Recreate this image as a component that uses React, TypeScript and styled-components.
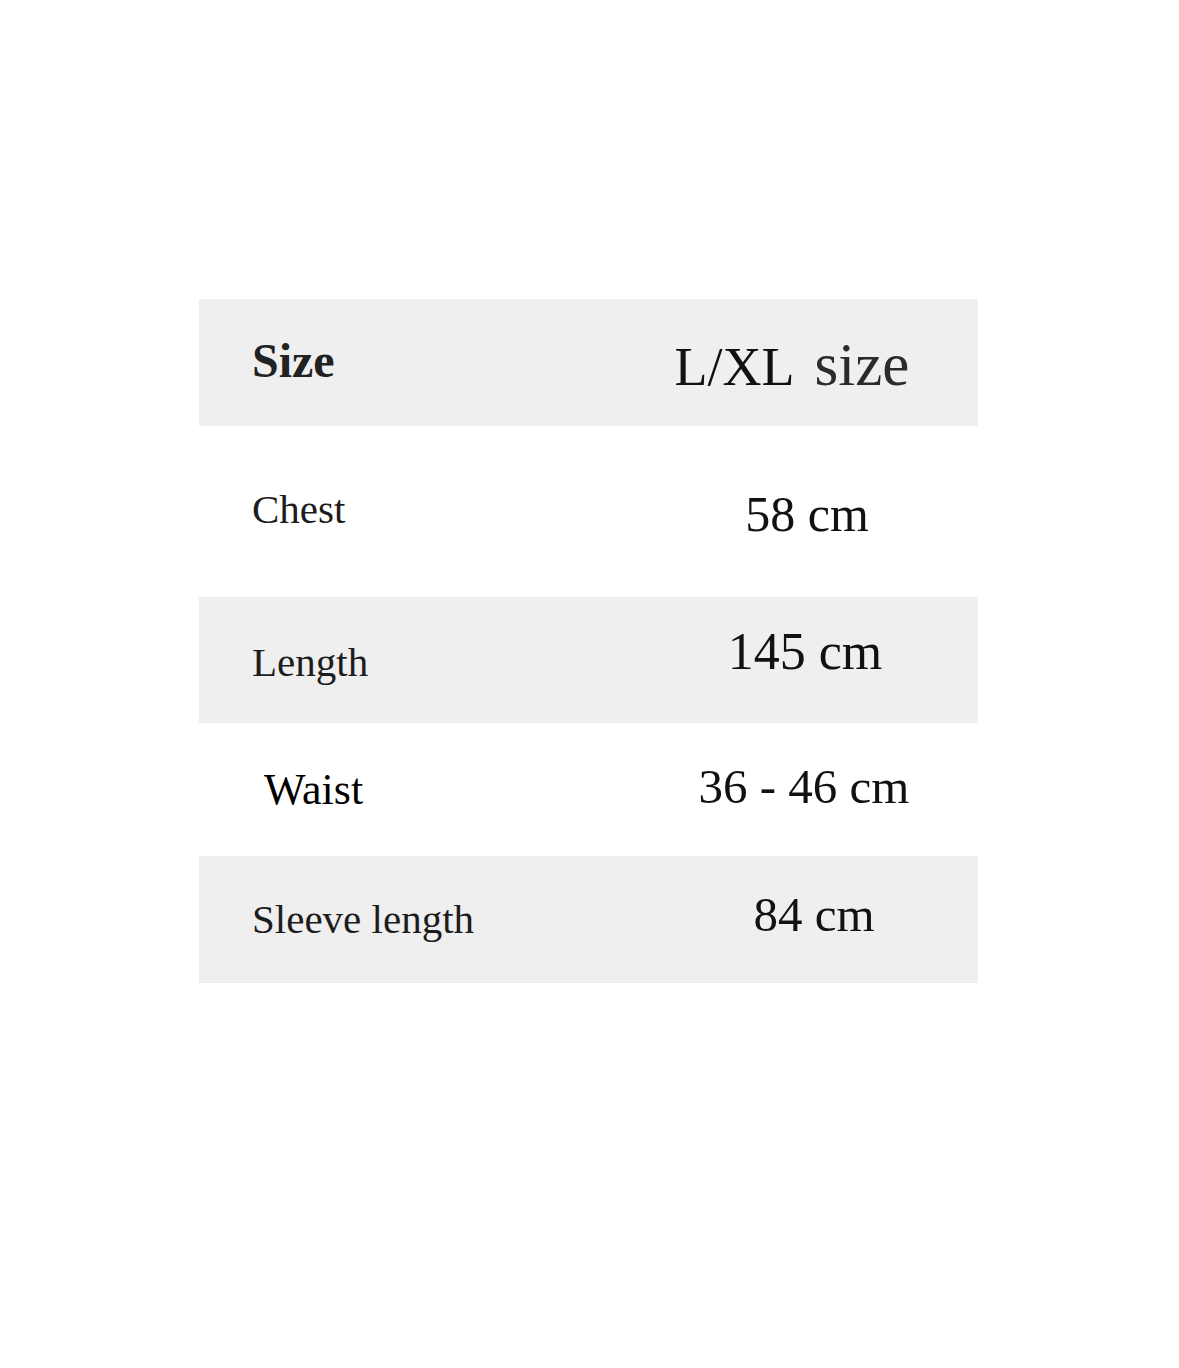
import styled, { createGlobalStyle } from 'styled-components';

const GlobalStyle = createGlobalStyle`
  html, body {
    margin: 0;
    padding: 0;
    background: #ffffff;
  }
  body {
    font-family: 'Liberation Serif', 'Times New Roman', serif;
  }
`;

const Page = styled.main`
  width: 1179px;
  min-height: 1368px;
  padding-top: 299px;
  box-sizing: border-box;
`;

const Table = styled.section`
  width: 779px;
  margin-left: 199px;
  display: flex;
  flex-direction: column;
`;

const Row = styled.div<{ $shaded?: boolean; $height: number }>`
  display: grid;
  grid-template-columns: 431px 1fr;
  align-items: center;
  height: ${({ $height }) => $height}px;
  background: ${({ $shaded }) => ($shaded ? '#efefef' : '#ffffff')};
`;

const Label = styled.div<{ $indent?: number; $nudge?: number; $size?: number; $dark?: boolean }>`
  padding-left: ${({ $indent = 53 }) => $indent}px;
  font-size: ${({ $size = 41 }) => $size}px;
  line-height: 1;
  color: ${({ $dark }) => ($dark ? '#000' : '#1d1d1d')};
  transform: translateY(${({ $nudge = 0 }) => $nudge}px);
`;

const HeadLabel = styled(Label)`
  font-weight: 700;
  color: #222;
`;

const Value = styled.div<{ $shift?: number; $nudge?: number; $size?: number }>`
  text-align: center;
  font-size: ${({ $size = 50 }) => $size}px;
  line-height: 1;
  color: #111;
  white-space: nowrap;
  transform: translate(${({ $shift = 0 }) => $shift}px, ${({ $nudge = 0 }) => $nudge}px);
`;

const SizeWord = styled.span`
  margin-left: 20px;
  font-size: 61px;
  color: #2b2b2b;
`;

const rows = [
  { label: 'Chest', value: '58 cm', height: 171, shaded: false, shift: 3, nudge: 2, labelNudge: -2 },
  { label: 'Length', value: '145 cm', height: 126, shaded: true, shift: 1, nudge: -8, labelNudge: 2, size: 52 },
  { label: 'Waist', value: '36 - 46 cm', height: 133, shaded: false, shift: 0, nudge: -3, labelNudge: 0, indent: 65, size: 49, labelSize: 44, dark: true },
  { label: 'Sleeve length', value: '84 cm', height: 127, shaded: true, shift: 10, nudge: -5, labelNudge: 0, size: 49 },
];

const App = () => {
  return (
    <>
      <GlobalStyle />
      <Page>
        <Table>
          <Row $shaded $height={127}>
            <HeadLabel $size={48} $nudge={-2}>
              Size
            </HeadLabel>
            <Value $size={54} $shift={-12} $nudge={2}>
              L/XL<SizeWord>size</SizeWord>
            </Value>
          </Row>
          {rows.map(({ label, value, height, shaded, shift, nudge, labelNudge, indent, size, labelSize, dark }) => (
            <Row key={label} $shaded={shaded} $height={height}>
              <Label $indent={indent} $nudge={labelNudge} $size={labelSize} $dark={dark}>
                {label}
              </Label>
              <Value $shift={shift} $nudge={nudge} $size={size}>
                {value}
              </Value>
            </Row>
          ))}
        </Table>
      </Page>
    </>
  );
};

export default App;
